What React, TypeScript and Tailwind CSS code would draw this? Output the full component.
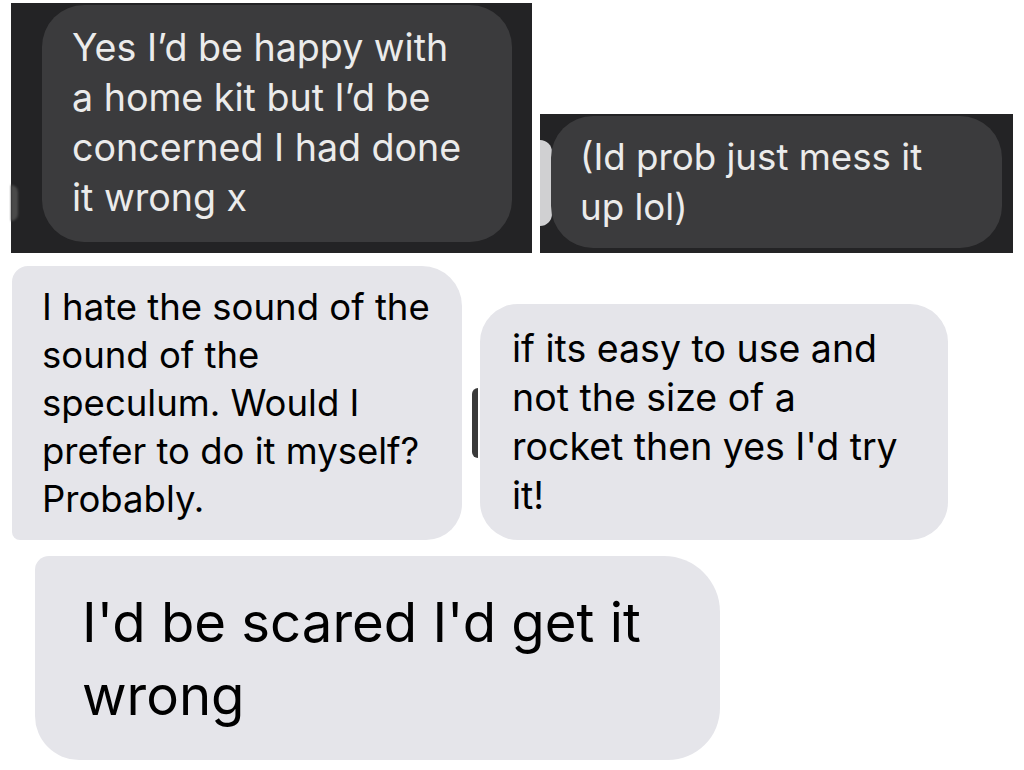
export default function App() {
  const font = { fontFamily: 'Inter, "Noto Sans", sans-serif' };
  return (
    <div className="w-[1024px] h-[770px] bg-white overflow-hidden" style={font}>
      {/* top row: two dark screenshots */}
      <div className="flex items-end gap-[8px] pl-[11px] pt-[3px]">
        <div className="relative w-[521px] h-[250px] bg-[#232325] pl-[31px] pt-[2px]">
          <div className="absolute left-0 top-[182px] w-[7px] h-[36px] rounded-r-full bg-[#4a4a4a] blur-[1px]" />
          <div className="w-[470px] h-[237px] rounded-[42px] bg-[#3b3b3d] px-[30px] pt-[18px] text-[37.6px] leading-[50px] text-[#ebebeb] whitespace-nowrap">
            Yes I’d be happy with
            <br />
            a home kit but I’d be
            <br />
            concerned I had done
            <br />
            it wrong x
          </div>
        </div>
        <div className="relative w-[473px] h-[139px] bg-[#232325] pl-[11px] pt-[2px]">
          <div className="absolute left-0 top-[26px] w-[12px] h-[86px] rounded-r-[14px] bg-[#d0d0d2]" />
          <div className="relative w-[451px] h-[132px] rounded-[42px] bg-[#3b3b3d] px-[29px] pt-[16px] text-[36.7px] leading-[50px] text-[#ebebeb] whitespace-nowrap">
            (Id prob just mess it
            <br />
            up lol)
          </div>
        </div>
      </div>

      {/* middle row: two light bubbles */}
      <div className="flex items-end mt-[13px] pl-[12px]">
        <div className="w-[450px] h-[274px] rounded-tl-[16px] rounded-tr-[40px] rounded-bl-[8px] rounded-br-[36px] bg-[#e5e5ea] pl-[30px] pt-[17px] text-[36.5px] leading-[48px] text-black whitespace-nowrap">
          I hate the sound of the
          <br />
          sound of the
          <br />
          speculum. Would I
          <br />
          prefer to do it myself?
          <br />
          Probably.
        </div>
        <div className="self-center ml-[10px] w-[6px] h-[70px] rounded-l-full bg-[#3a3a3a] mt-[40px]" />
        <div className="ml-[2px] w-[468px] h-[236px] rounded-[38px] bg-[#e5e5ea] pl-[32px] pt-[20px] text-[37.5px] leading-[49px] text-black whitespace-nowrap">
          if its easy to use and
          <br />
          not the size of a
          <br />
          rocket then yes I'd try
          <br />
          it!
        </div>
      </div>

      {/* bottom bubble */}
      <div className="mt-[16px] ml-[35px] w-[685px] h-[204px] rounded-tl-[14px] rounded-tr-[56px] rounded-bl-[44px] rounded-br-[52px] bg-[#e5e5ea] pl-[47px] pt-[30px] text-[54.5px] leading-[73px] text-black whitespace-nowrap">
        I'd be scared I'd get it
        <br />
        wrong
      </div>
    </div>
  );
}
